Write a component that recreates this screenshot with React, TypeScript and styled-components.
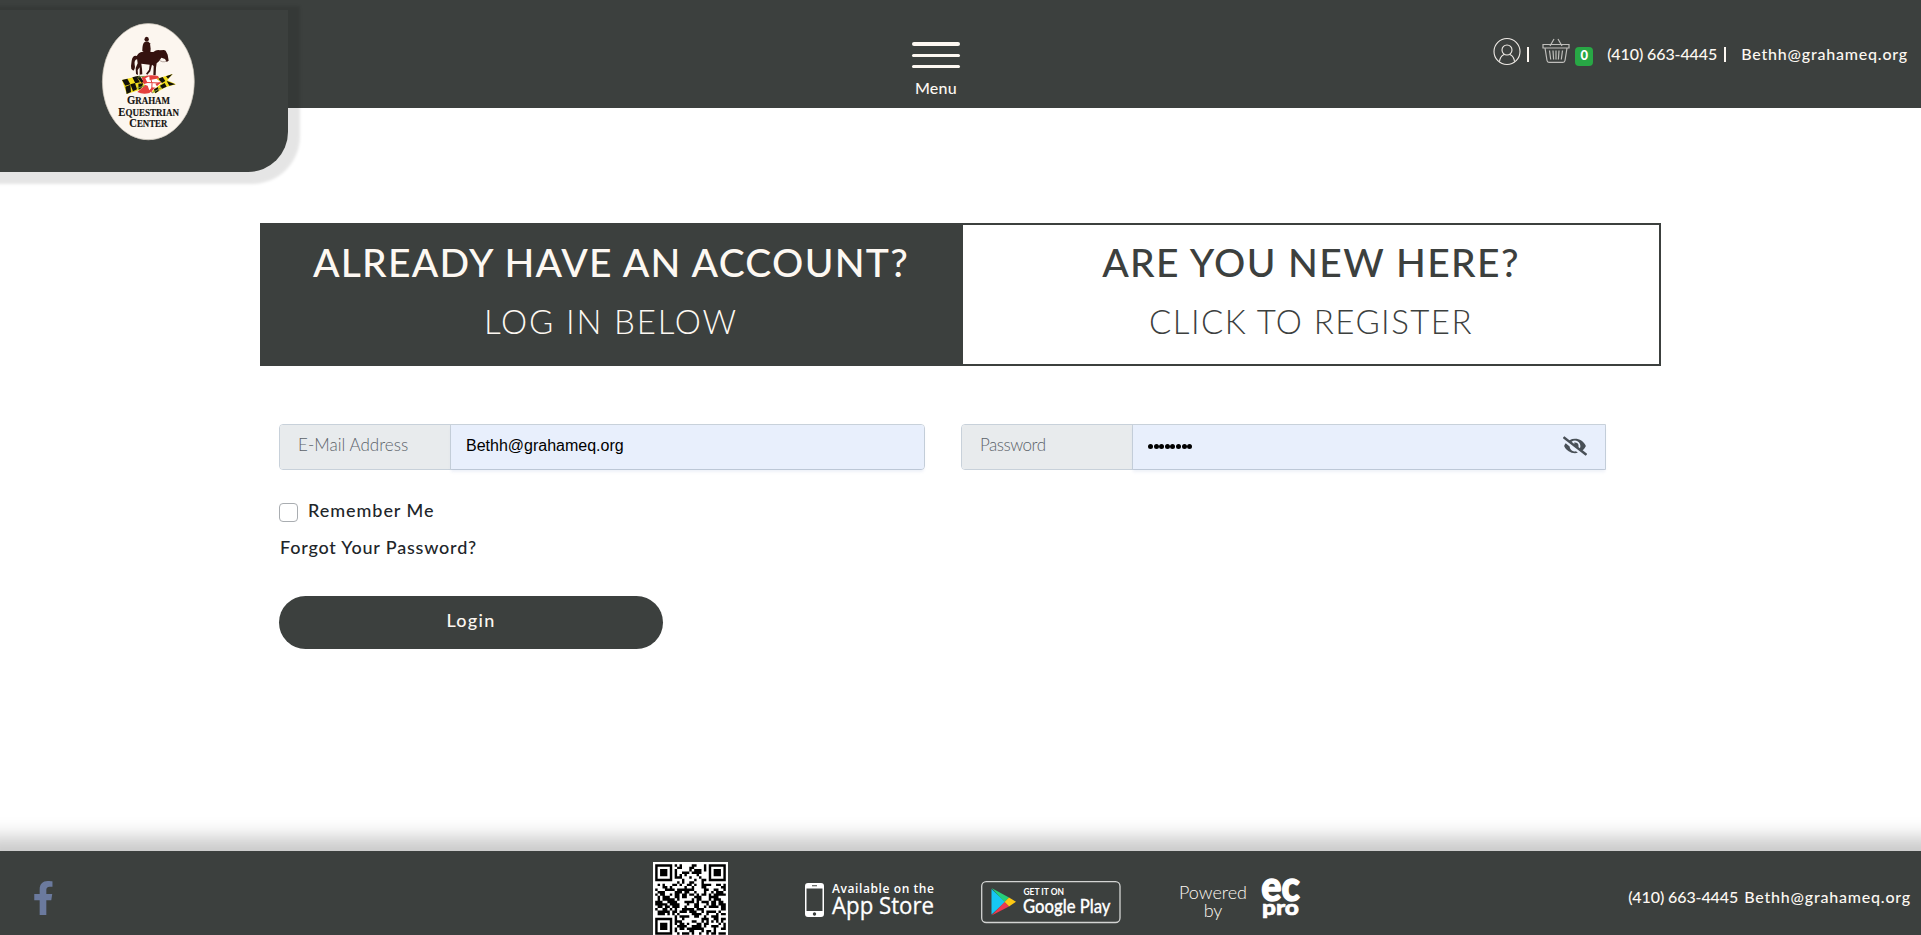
import React from 'react';
import styled, { createGlobalStyle } from 'styled-components';
import { FaEyeSlash, FaFacebookF } from 'react-icons/fa';

const DARK = '#3c403e';
const CREAM = '#fdf8f2';
const FONT = "Lato, 'Liberation Sans', sans-serif";

const GlobalStyle = createGlobalStyle`
  * { box-sizing: border-box; }
  body { margin: 0; background: #fff; font-family: ${FONT}; color: #212529; overflow: hidden; }
  a { color: inherit; text-decoration: none; }
  button { font-family: inherit; border: 0; }
  svg { display: block; flex: none; overflow: visible; }
`;

const Page = styled.div`
  display: flex;
  flex-direction: column;
  height: 935px;
  overflow: hidden;
`;

const Header = styled.header`
  display: grid;
  grid-template-columns: 912px 48px 1fr;
  align-items: start;
  height: 108px;
  flex: none;
  background: ${DARK};
  color: ${CREAM};
`;

const LogoPanel = styled.a`
  display: flex;
  width: 288px;
  height: 162px;
  margin-top: 10px;
  padding: 11px 0 0 100px;
  border-radius: 0 0 40px 0;
  background: ${DARK};
  box-shadow: 4px 4px 3px 8px rgba(0, 0, 0, 0.1);
`;

const MenuButton = styled.button`
  display: flex;
  flex-direction: column;
  align-items: center;
  padding: 42px 0 0;
  background: none;
  color: ${CREAM};
  font-size: 16px;
  font-weight: 500;
  line-height: 20px;
  letter-spacing: 0.3px;
`;

const Bars = styled.span`
  display: grid;
  grid-template-rows: 4px 3px 3px;
  row-gap: 8px;
  width: 48px;
  margin-bottom: 10px;
`;

const Bar = styled.span`
  border-radius: 2px;
  background: ${CREAM};
`;

const HeaderTools = styled.div`
  display: flex;
  justify-content: flex-end;
  padding: 38px 13px 0 0;
  font-size: 16px;
  font-weight: 500;
  line-height: 20px;
`;

const IconLink = styled.a`
  display: flex;
  height: 28px;
`;

const Divider = styled.span<{ $left: number; $right: number }>`
  width: 1.5px;
  height: 15px;
  margin: 9px ${p => p.$right}px 0 ${p => p.$left}px;
  background: ${CREAM};
`;

const CartCount = styled.span`
  width: 18px;
  height: 19px;
  margin: 9px 14px 0 5px;
  border-radius: 4px;
  background: #28a745;
  color: #fff;
  font-size: 13px;
  font-weight: 900;
  line-height: 16px;
  text-align: center;
`;

const Phone = styled.a`
  margin-top: 6px;
  letter-spacing: -0.1px;
  white-space: nowrap;
`;

const Email = styled.a`
  margin-top: 6px;
  letter-spacing: 0.8px;
  white-space: nowrap;
`;

const Main = styled.main`
  flex: 1;
  padding: 115px 260px 0;
`;

const Tabs = styled.div`
  display: grid;
  grid-template-columns: 701px 1fr;
  width: 1401px;
  height: 143px;
  border: 2px solid ${DARK};
`;

const Tab = styled.a<{ $active?: boolean }>`
  display: flex;
  flex-direction: column;
  align-items: center;
  padding: 17px ${p => (p.$active ? 3 : 0)}px 0 0;
  background: ${p => (p.$active ? DARK : '#fff')};
  color: ${p => (p.$active ? CREAM : DARK)};
`;

const TabTitle = styled.span<{ $tracking: number }>`
  font-size: 39px;
  font-weight: 500;
  line-height: 40px;
  letter-spacing: ${p => p.$tracking}px;
`;

const TabSubtitle = styled.span<{ $tracking: number }>`
  margin-top: 19px;
  font-size: 33px;
  font-weight: 300;
  line-height: 40px;
  letter-spacing: ${p => p.$tracking}px;
`;

const Form = styled.form`
  padding: 58px 56px 0 19px;
`;

const Fields = styled.div`
  display: grid;
  grid-template-columns: 646px 645px;
  column-gap: 36px;
`;

const Field = styled.div<{ $square?: boolean }>`
  display: grid;
  grid-template-columns: 171px 1fr;
  height: 46px;
  border: 1px solid #c8d1da;
  border-radius: ${p => (p.$square ? '4px 0 0 4px' : '4px')};
`;

const FieldLabel = styled.label<{ $tracking: number }>`
  padding-left: 18px;
  border-right: 1px solid #c8d1da;
  border-radius: 3px 0 0 3px;
  background: #e8ebed;
  color: #5c636a;
  font-size: 17px;
  font-weight: 300;
  line-height: 40px;
  letter-spacing: ${p => p.$tracking}px;
`;

const FieldValue = styled.div<{ $square?: boolean }>`
  display: flex;
  align-items: center;
  justify-content: space-between;
  padding: 0 18px 2px 15px;
  border-radius: ${p => (p.$square ? '0' : '0 3px 3px 0')};
  background: #e8effc;
  box-shadow: 0 3px 3px rgba(90, 120, 190, 0.1);
  color: #000;
  font-family: 'Liberation Sans', Arial, sans-serif;
  font-size: 16px;
`;

const Dots = styled.span`
  display: flex;
  gap: 0.6px;
`;

const Dot = styled.i`
  width: 5px;
  height: 5px;
  border-radius: 50%;
  background: #000;
`;

const RememberRow = styled.label`
  display: flex;
  gap: 10px;
  margin-top: 28px;
  font-size: 18px;
  font-weight: 500;
  line-height: 24px;
  letter-spacing: 0.95px;
`;

const Checkbox = styled.span`
  width: 19px;
  height: 19px;
  margin-top: 5px;
  border: 1px solid #a9adb1;
  border-radius: 4px;
`;

const ForgotLink = styled.a`
  display: block;
  margin: 13px 0 0 1px;
  font-size: 18px;
  font-weight: 500;
  line-height: 24px;
  letter-spacing: 0.8px;
`;

const LoginButton = styled.button`
  display: block;
  width: 384px;
  height: 53px;
  margin-top: 37px;
  padding: 0 0 6px;
  border-radius: 27px;
  background: ${DARK};
  color: ${CREAM};
  font-size: 18px;
  font-weight: 500;
  letter-spacing: 1.3px;
`;

const Footer = styled.footer`
  display: flex;
  align-items: flex-start;
  height: 84px;
  flex: none;
  padding-right: 10px;
  background: ${DARK};
  color: ${CREAM};
  box-shadow: 0 6px 18px 20px rgba(0, 0, 0, 0.21);
`;

const SocialLink = styled.a`
  display: flex;
  width: 653px;
  padding: 30px 0 0 34px;
  color: #6b7a9e;
`;

const FacebookIcon = styled(FaFacebookF)`
  width: 19px;
  height: 34px;
`;

const FooterItem = styled.a<{ $top: number; $left: number }>`
  display: flex;
  flex: none;
  padding-top: ${p => p.$top}px;
  margin-left: ${p => p.$left}px;
`;

const Powered = styled.span`
  display: flex;
  flex-direction: column;
  align-items: center;
  width: 68px;
  margin: 32px 15px 0 58px;
  font-size: 18px;
  font-weight: 300;
  line-height: 18px;
`;

const FooterContact = styled.div`
  display: flex;
  gap: 6px;
  margin: 30px 0 0 auto;
  font-size: 16px;
  font-weight: 500;
  line-height: 20px;
`;

function CenterLogo() {
  return (
    <svg width="96" height="120" viewBox="300 63 288 360">
      <ellipse cx="445" cy="245" rx="138" ry="174.500" fill="#fcf6ef" stroke="#c9c3b6" strokeWidth="2" />
      <g fill="#35120f">
        <ellipse cx="440" cy="118" rx="6.500" ry="7.500" />
        <path d="M434 126 Q427 130 427 151 L432 158 H451 L452 146 L450 130 L445 125Z" />
        <path d="M410 169 Q414 157 428 155 L460 156 Q470 148 480 151 L492 150 L497 152 L503 164 L506 182 L500 186 L495 177 L484 173 L477 184 L470 190 L468 203 L467 226 H460 L461 198 L456 194 L451 214 L442 224 L438 221 L447 209 L449 194 L424 191 L426 206 L427 223 L419 224 L419 202 L413 210 L414 225 L408 222 L407 204 L413 190Z" />
        <path d="M411 168 Q398 164 395 182 Q392 198 394 207 L400 212 Q407 205 404 194 Q402 180 411 178Z" />
      </g>
      <path d="M476 178 Q487 190 500 183" fill="none" stroke="#6b514b" strokeWidth="1.500" />
      <path d="M366 240 L419 227 L434 257 L418 270 L380 282Z" fill="#f2dd1c" />
      <path d="M366 240 L382 236 L391 253 L376 257Z M397 232 L409 229 L420 247 L406 250Z M391 253 L405 249 L411 268 L399 274Z M376 260 L391 254 L393 276 L380 282Z M409 229 L419 227 L433 247 L424 248Z M415 251 L430 250 L424 265 L416 269Z" fill="#12110b" />
      <path d="M425 232 Q445 222 474 228 L484 246 L466 263 L448 279 Q428 284 412 276 L434 257Z" fill="#e5403d" />
      <path d="M436 235 L448 229 L449 240 L470 236 L482 246 L466 251 L474 264 L456 262 L448 271 L443 257 L430 253 L443 249Z" fill="#fff" />
      <path d="M450 228 L456 250 L455 278 M427 247 L481 249" fill="none" stroke="#e5403d" strokeWidth="3" />
      <path d="M470 236 L518 222 L502 241 L528 253 L496 262 L466 280 L456 274 L486 249Z" fill="#f2dd1c" />
      <path d="M475 236 L488 231 L496 243 L486 249Z M498 229 L518 222 L504 236Z M500 243 L526 253 L508 257Z M480 257 L494 249 L500 260 L486 266Z M462 268 L474 261 L476 273 L466 280Z" fill="#12110b" />
      <path d="M414 231 L434 229 M412 264 L434 258 M456 279 L484 263" stroke="#7c9a45" strokeWidth="3" />
      <g fill="#14110f" stroke="#14110f" strokeWidth="0.500" fontFamily="'Liberation Serif', serif" fontWeight="700">
        <text x="381" y="313" fontSize="38" textLength="129" lengthAdjust="spacingAndGlyphs">G<tspan fontSize="32">RAHAM</tspan></text>
        <text x="355" y="347" fontSize="38" textLength="182" lengthAdjust="spacingAndGlyphs">E<tspan fontSize="32">QUESTRIAN</tspan></text>
        <text x="388" y="381" fontSize="38" textLength="114" lengthAdjust="spacingAndGlyphs">C<tspan fontSize="32">ENTER</tspan></text>
      </g>
    </svg>
  );
}

function UserIcon() {
  return (
    <svg width="28" height="28" viewBox="0 0 28 28" fill="none" stroke="#efebe6" strokeWidth="1.100">
      <circle cx="14" cy="13.500" r="13" />
      <circle cx="14" cy="12" r="5" />
      <path d="M6.500 23.500 Q7 18.500 11 16.500 M17 16.500 Q21 18.500 21.500 23.500" />
    </svg>
  );
}

function BasketIcon() {
  return (
    <svg width="28" height="28" viewBox="0 0 28 28" fill="none" stroke="#bfbebb" strokeWidth="1.200">
      <path d="M1 6.500 H27 V10 H1Z M3 10 L5 22.500 Q5.300 24.300 7 24.300 H21 Q22.700 24.300 23 22.500 L25 10 M8 8 L12 1 M20 8 L16 1" />
      <path d="M7.500 12.500 L8.700 21.500 M11 12.500 L11.600 21.500 M14 12.500 V21.500 M17 12.500 L16.400 21.500 M20.500 12.500 L19.300 21.500" />
    </svg>
  );
}

const QR_SIZE = 29;

function finderModule(x: number, y: number): boolean | null {
  const corners = [[0, 0], [QR_SIZE - 7, 0], [0, QR_SIZE - 7]];
  for (const [cx, cy] of corners) {
    const dx = Math.abs(x - cx - 3);
    const dy = Math.abs(y - cy - 3);
    const ring = Math.max(dx, dy);
    if (ring <= 4) return ring === 3 || ring <= 1;
  }
  return null;
}

function qrPath() {
  let seed = 48271;
  let d = '';
  for (let y = 0; y < QR_SIZE; y++) {
    for (let x = 0; x < QR_SIZE; x++) {
      seed = (seed * 16807) % 2147483647;
      const finder = finderModule(x, y);
      const dark = finder === null ? seed / 2147483647 < 0.52 : finder;
      if (dark) d += `M${x} ${y}h1v1h-1z`;
    }
  }
  return d;
}

function QrCode() {
  return (
    <svg width="75" height="73" viewBox="-0.9 -0.9 30.800 29.980">
      <rect x="-0.900" y="-0.900" width="30.800" height="30.800" fill="#fff" />
      <path d={qrPath()} fill="#000" />
    </svg>
  );
}

function AppStoreBadge() {
  return (
    <svg width="130" height="42" viewBox="0 0 130 42" fill="#fff">
      <path fillRule="evenodd" d="M3 1 H16 Q19 1 19 4 V32 Q19 35 16 35 H3 Q0 35 0 32 V4 Q0 1 3 1Z M1.500 6.500 V29 H17.500 V6.500Z M7 3.200 V4.300 H12 V3.200Z M9.500 30.300 A1.700 1.700 0 1 0 9.510 30.300Z" />
      <g fontFamily="'Open Sans', 'Noto Sans', sans-serif">
        <text x="27" y="10.700" fontSize="12" fontWeight="600" textLength="102">Available on the</text>
        <text x="27" y="32.300" fontSize="23.500" fontWeight="500" stroke="#fff" strokeWidth="0.300" textLength="102" lengthAdjust="spacingAndGlyphs">App Store</text>
      </g>
    </svg>
  );
}

function GooglePlayBadge() {
  return (
    <svg width="140" height="43" viewBox="0 0 140 43">
      <rect x="0.700" y="0.700" width="138.300" height="40.800" rx="4.500" fill="none" stroke="#d3d4d3" strokeWidth="1.300" />
      <path d="M10.500 8 V33.500 L24.500 21Z" fill="#16c7f3" />
      <path d="M10.500 7 L28 16.500 L23.500 21Z" fill="#26d07b" />
      <path d="M28 16.500 L35 20.800 L28 25.500 L23.500 21Z" fill="#fdc914" />
      <path d="M10.500 34.500 L28 25.500 L23.500 21Z" fill="#ec3a50" />
      <g fill="#fff" fontFamily="Lato, sans-serif">
        <text x="42.500" y="14" fontSize="9.200" fontWeight="700" textLength="40.500" lengthAdjust="spacingAndGlyphs">GET IT ON</text>
        <text x="42" y="31.800" fontSize="19.500" fontWeight="500" textLength="87.500" lengthAdjust="spacingAndGlyphs" stroke="#fff" strokeWidth="0.300">Google Play</text>
      </g>
    </svg>
  );
}

function EcProLogo() {
  return (
    <svg width="38" height="44" viewBox="0 0 38 44" fill="#fff" stroke="#fff" fontFamily="Lato, sans-serif" fontWeight="900">
      <text x="-0.800" y="24" fontSize="41" strokeWidth="1.400" textLength="38.500" lengthAdjust="spacingAndGlyphs">ec</text>
      <text x="0" y="38.200" fontSize="21" strokeWidth="0.600" textLength="37" lengthAdjust="spacingAndGlyphs">pro</text>
    </svg>
  );
}

export default function App() {
  return (
    <Page>
      <GlobalStyle />
      <Header>
        <LogoPanel href="#"><CenterLogo /></LogoPanel>
        <MenuButton>
          <Bars><Bar /><Bar /><Bar /></Bars>
          Menu
        </MenuButton>
        <HeaderTools>
          <IconLink href="#"><UserIcon /></IconLink>
          <Divider $left={6} $right={13.5} />
          <IconLink href="#"><BasketIcon /></IconLink>
          <CartCount>0</CartCount>
          <Phone href="#">(410) 663-4445</Phone>
          <Divider $left={7} $right={15.5} />
          <Email href="#">Bethh@grahameq.org</Email>
        </HeaderTools>
      </Header>

      <Main>
        <Tabs>
          <Tab href="#" $active>
            <TabTitle $tracking={1.28}>ALREADY HAVE AN ACCOUNT?</TabTitle>
            <TabSubtitle $tracking={1.85}>LOG IN BELOW</TabSubtitle>
          </Tab>
          <Tab href="#">
            <TabTitle $tracking={1.38}>ARE YOU NEW HERE?</TabTitle>
            <TabSubtitle $tracking={1.46}>CLICK TO REGISTER</TabSubtitle>
          </Tab>
        </Tabs>

        <Form>
          <Fields>
            <Field>
              <FieldLabel $tracking={0.04}>E-Mail Address</FieldLabel>
              <FieldValue>Bethh@grahameq.org</FieldValue>
            </Field>
            <Field $square>
              <FieldLabel $tracking={-0.5}>Password</FieldLabel>
              <FieldValue $square>
                <Dots>{Array.from({ length: 8 }, (_, i) => <Dot key={i} />)}</Dots>
                <FaEyeSlash size={24} color="#495057" />
              </FieldValue>
            </Field>
          </Fields>
          <RememberRow><Checkbox />Remember Me</RememberRow>
          <ForgotLink href="#">Forgot Your Password?</ForgotLink>
          <LoginButton type="button">Login</LoginButton>
        </Form>
      </Main>

      <Footer>
        <SocialLink href="#"><FacebookIcon viewBox="22 0 280 512" /></SocialLink>
        <FooterItem href="#" $top={11} $left={0}><QrCode /></FooterItem>
        <FooterItem href="#" $top={31} $left={77}><AppStoreBadge /></FooterItem>
        <FooterItem href="#" $top={30} $left={46}><GooglePlayBadge /></FooterItem>
        <Powered><span>Powered</span><span>by</span></Powered>
        <FooterItem href="#" $top={26} $left={0}><EcProLogo /></FooterItem>
        <FooterContact>
          <Phone href="#">(410) 663-4445</Phone>
          <Email href="#">Bethh@grahameq.org</Email>
        </FooterContact>
      </Footer>
    </Page>
  );
}
